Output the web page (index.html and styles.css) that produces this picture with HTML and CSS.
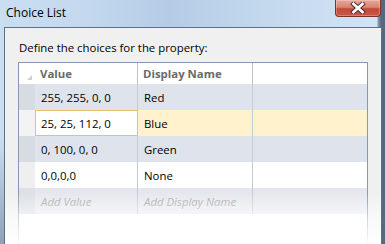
FILE: index.html
```html
<!DOCTYPE html>
<html>
<head>
<meta charset="utf-8">
<link rel="stylesheet" href="styles.css">
</head>
<body>
<div class="window">
  <div class="titlebar">
    <span class="title">Choice List</span>
    <div class="close">
      <svg width="18" height="12" viewBox="0 0 18 12">
        <path d="M4.5 2 L13.5 10 M13.5 2 L4.5 10" stroke="#4a2a24" stroke-width="4.6" stroke-linecap="square" fill="none"/>
        <path d="M4.5 2 L13.5 10 M13.5 2 L4.5 10" stroke="#ffffff" stroke-width="2.8" stroke-linecap="square" fill="none"/>
      </svg>
    </div>
  </div>
  <div class="client">
    <div class="label">Define the choices for the property:</div>
    <div class="grid">
      <div class="row head">
        <div class="rh corner"><span class="tri"></span></div>
        <div class="cell">Value</div>
        <div class="cell">Display Name</div>
        <div class="cell last"></div>
      </div>
      <div class="row alt">
        <div class="rh"></div>
        <div class="cell">255, 255, 0, 0</div>
        <div class="cell">Red</div>
        <div class="cell last"></div>
      </div>
      <div class="row sel">
        <div class="rh"></div>
        <div class="cell edit">25, 25, 112, 0</div>
        <div class="cell">Blue</div>
        <div class="cell last"></div>
      </div>
      <div class="row alt">
        <div class="rh"></div>
        <div class="cell">0, 100, 0, 0</div>
        <div class="cell">Green</div>
        <div class="cell last"></div>
      </div>
      <div class="row plain">
        <div class="rh"></div>
        <div class="cell">0,0,0,0</div>
        <div class="cell">None</div>
        <div class="cell last"></div>
      </div>
      <div class="row add">
        <div class="rh"></div>
        <div class="cell ph">Add Value</div>
        <div class="cell ph">Add Display Name</div>
        <div class="cell last"></div>
      </div>
    </div>
    <div class="fade"></div>
  </div>
</div>
</body>
</html>
```

FILE: styles.css
```css
html, body {
  margin: 0;
  padding: 0;
}
body {
  width: 385px;
  height: 244px;
  overflow: hidden;
  font-family: "Open Sans", "Noto Sans", sans-serif;
  font-size: 11.4px;
  color: #000;
}
.window {
  width: 385px;
  height: 244px;
  box-sizing: border-box;
  display: flex;
  flex-direction: column;
  padding: 0 3px 0 4px;
  background:
    linear-gradient(90deg, rgba(255,255,255,0) 0, rgba(255,255,255,0) 377px, #8c9cae 378px, #56687c 381px),
    linear-gradient(180deg, rgba(255,255,255,0) 0, rgba(255,255,255,0) 140px, rgba(90,110,135,0.55) 244px),
    linear-gradient(90deg, #cadef2 0, #c3d8ee 90px, #b4cce6 170px, #bcd3ea 220px, #c9dcf0 300px, #d2e4f5 385px);
}
.titlebar {
  height: 27px;
  flex: none;
  display: flex;
  justify-content: space-between;
  align-items: flex-start;
  padding: 0 1px 0 2px;
}
.title {
  margin-top: 4px;
  font-size: 12px;
  line-height: 17px;
  color: #000;
}
.close {
  width: 46px;
  height: 17px;
  box-sizing: border-box;
  border: 1px solid #7a3328;
  border-top: none;
  border-radius: 0 0 4px 4px;
  background: linear-gradient(180deg, #e7a89b 0, #d98474 45%, #c24a36 55%, #c8584a 100%);
  display: flex;
  align-items: center;
  justify-content: center;
  box-shadow: inset 0 0 0 1px rgba(255,255,255,0.25);
}
.close svg {
  display: block;
  margin-top: -1px;
}
.client {
  flex: 1;
  position: relative;
  background: #f0f0f0;
  border: 1px solid #5c7088;
  border-bottom: none;
  padding: 12px 13px 0 13px;
  overflow: hidden;
}
.label {
  padding-left: 1px;
  line-height: 16px;
  height: 16px;
  margin-bottom: 6px;
  color: #000;
}
.grid {
  border: 1px solid #8499b4;
  border-bottom: none;
  background: #ffffff;
  height: 300px;
}
.row {
  display: grid;
  grid-template-columns: 16px 103px 115px 1fr;
  height: 26px;
}
.row.head {
  height: 21px;
  background: #ffffff;
}
.cell {
  box-sizing: border-box;
  border-right: 1px solid #c4cbd6;
  padding-left: 6px;
  display: flex;
  align-items: center;
  white-space: nowrap;
  overflow: hidden;
}
.cell.last {
  border-right: none;
}
.head .cell {
  font-weight: bold;
  color: #6a6a6a;
  padding-left: 5px;
  border-right-color: #bcc6d3;
}
.rh {
  position: relative;
}
.corner .tri {
  position: absolute;
  right: 3px;
  bottom: 4px;
  width: 0;
  height: 0;
  border-left: 5px solid transparent;
  border-bottom: 5px solid #cfcfcf;
}
.row.alt {
  background: #dfe3eb;
}
.row.alt .rh {
  background: #d6dbe4;
}
.row.sel {
  background: #fff2cc;
}
.row.sel .rh {
  background: #f3f3f3;
}
.cell.edit {
  background: #ffffff;
  border: 1px solid #e3c26b;
  padding-left: 5px;
}
.row.plain {
  background: #ffffff;
}
.row.plain .rh {
  background: #efefef;
}
.row.add {
  background: linear-gradient(180deg, #e3e6ec, #e9ebf0);
}
.row.add .rh {
  background: #dce0e7;
}
.cell.ph {
  font-style: italic;
  color: #a6a6a6;
}
.fade {
  position: absolute;
  left: 0;
  right: 0;
  bottom: 0;
  height: 52px;
  background: linear-gradient(180deg, rgba(255,255,255,0) 0, rgba(255,255,255,0.55) 45%, rgba(255,255,255,0.95) 100%);
}
```
